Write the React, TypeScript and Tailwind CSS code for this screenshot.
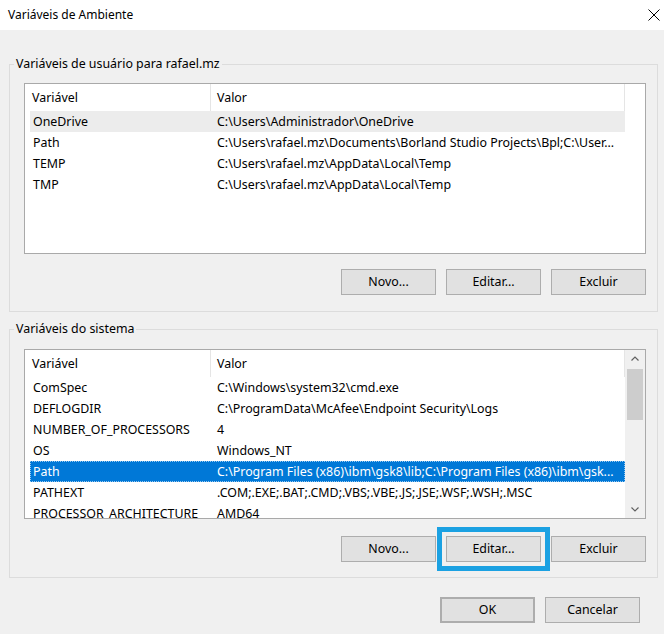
import React from 'react';

type Row = { name: string; value: string; state?: 'hover' | 'selected' };

const userVars: Row[] = [
  { name: 'OneDrive', value: 'C:\\Users\\Administrador\\OneDrive', state: 'hover' },
  { name: 'Path', value: 'C:\\Users\\rafael.mz\\Documents\\Borland Studio Projects\\Bpl;C:\\User...' },
  { name: 'TEMP', value: 'C:\\Users\\rafael.mz\\AppData\\Local\\Temp' },
  { name: 'TMP', value: 'C:\\Users\\rafael.mz\\AppData\\Local\\Temp' },
];

const systemVars: Row[] = [
  { name: 'ComSpec', value: 'C:\\Windows\\system32\\cmd.exe' },
  { name: 'DEFLOGDIR', value: 'C:\\ProgramData\\McAfee\\Endpoint Security\\Logs' },
  { name: 'NUMBER_OF_PROCESSORS', value: '4' },
  { name: 'OS', value: 'Windows_NT' },
  { name: 'Path', value: 'C:\\Program Files (x86)\\ibm\\gsk8\\lib;C:\\Program Files (x86)\\ibm\\gsk...', state: 'selected' },
  { name: 'PATHEXT', value: '.COM;.EXE;.BAT;.CMD;.VBS;.VBE;.JS;.JSE;.WSF;.WSH;.MSC' },
  { name: 'PROCESSOR_ARCHITECTURE', value: 'AMD64' },
];

const Button: React.FC<{ label: string; className?: string }> = ({ label, className = '' }) => (
  <button
    className={`h-[26px] w-[95px] bg-[#e1e1e1] border border-[#adadad] text-[12.4px] leading-none text-black ${className}`}
  >
    {label}
  </button>
);

const Chevron: React.FC<{ up?: boolean }> = ({ up }) => (
  <svg width="8" height="5" viewBox="0 0 8 5">
    <polyline
      points={up ? '0.5,4.5 4,1 7.5,4.5' : '0.5,0.5 4,4 7.5,0.5'}
      fill="none"
      stroke="#606060"
      strokeWidth="1.2"
    />
  </svg>
);

const VarList: React.FC<{ rows: Row[]; scroll?: boolean; height: string }> = ({ rows, scroll, height }) => (
  <div className={`ml-[14px] mr-[11px] ${height} border border-[#a9a9a9] bg-white flex overflow-hidden`}>
    <div className="w-[600px] flex flex-col">
      {/* cabeçalho */}
      <div className="h-[27px] flex shrink-0">
        <div className="w-[186px] pl-[7px] pt-[2px] flex items-center border-r border-[#e5e5e5]">Variável</div>
        <div className="flex-1 pl-[6px] pt-[2px] flex items-center border-r border-[#e5e5e5]">Valor</div>
      </div>
      {rows.map((row) => (
        <div
          key={row.name + row.value}
          className={`ml-[5px] h-[21px] pt-[2px] shrink-0 flex items-center whitespace-nowrap ${
            row.state === 'selected'
              ? 'bg-[#0078d7] text-white outline outline-1 outline-dotted outline-[#99c9ef] -outline-offset-1'
              : row.state === 'hover'
              ? 'bg-[#ececec]'
              : ''
          }`}
        >
          <div className="w-[181px] pl-[3px] overflow-hidden">{row.name}</div>
          <div className="flex-1 pl-[6px] overflow-hidden">{row.value}</div>
        </div>
      ))}
    </div>
    {scroll && (
      <div className="w-[20px] bg-[#f0f0f0] flex flex-col">
        <div className="h-[17px] flex items-center justify-center">
          <Chevron up />
        </div>
        <div className="flex-1">
          <div className="mt-[2px] ml-[2px] mr-[2px] h-[51px] bg-[#cdcdcd]" />
        </div>
        <div className="h-[17px] flex items-center justify-center">
          <Chevron />
        </div>
      </div>
    )}
  </div>
);

export default function App() {
  return (
    <div
      className="w-[664px] h-[634px] bg-[#f0f0f0] flex flex-col text-[12.4px] text-black overflow-hidden"
      style={{ fontFamily: '"Noto Sans", "Open Sans", sans-serif' }}
    >
      {/* barra de título */}
      <div className="h-[30px] bg-white flex items-center justify-between pl-[8px] pr-[3px] shrink-0">
        <span className="text-[12px]">Variáveis de Ambiente</span>
        <svg width="12" height="12" viewBox="0 0 12 12" className="mr-[1px]">
          <path d="M0.5 0.5 L11.5 11.5 M11.5 0.5 L0.5 11.5" stroke="#000" strokeWidth="1" />
        </svg>
      </div>

      {/* variáveis de usuário */}
      <div className="mt-[34px] ml-[9px] mr-[6px] h-[248px] border border-[#dcdcdc] flex flex-col shrink-0">
        <div className="-mt-[9px] ml-[4px] w-fit bg-[#f0f0f0] px-[2px] leading-[16px]">
          Variáveis de usuário para rafael.mz
        </div>
        <div className="mt-[11px]">
          <VarList rows={userVars} height="h-[171px]" />
        </div>
        <div className="mt-[15px] mr-[11px] flex justify-end gap-[10px]">
          <Button label="Novo..." />
          <Button label="Editar..." />
          <Button label="Excluir" className="w-[94px]" />
        </div>
      </div>

      {/* variáveis do sistema */}
      <div className="mt-[17px] ml-[9px] mr-[6px] h-[249px] border border-[#dcdcdc] flex flex-col shrink-0">
        <div className="-mt-[9px] ml-[4px] w-fit bg-[#f0f0f0] px-[2px] leading-[16px]">
          Variáveis do sistema
        </div>
        <div className="mt-[12px]">
          <VarList rows={systemVars} scroll height="h-[170px]" />
        </div>
        <div className="mt-[17px] mr-[11px] flex justify-end gap-[10px]">
          <Button label="Novo..." />
          <Button
            label="Editar..."
            className="outline outline-[5px] outline-[#1ba1e2] outline-offset-[4px]"
          />
          <Button label="Excluir" className="w-[94px]" />
        </div>
      </div>

      {/* OK / Cancelar */}
      <div className="mt-[19px] pr-[24px] flex justify-end gap-[10px] shrink-0">
        <Button label="OK" className="border-2 border-[#0078d7]" />
        <Button label="Cancelar" className="w-[94px]" />
      </div>
    </div>
  );
}
